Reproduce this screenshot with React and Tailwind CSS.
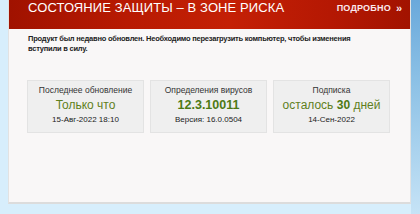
export default function App() {
  return (
    <div className="w-[420px] h-[214px] overflow-hidden flex bg-[#d7eefc]" style={{ fontFamily: '"Liberation Sans", Arial, sans-serif' }}>
      <div className="w-[8px] shrink-0" />
      <div className="w-[403px] shrink-0 flex flex-col">
        <div className="h-[204px] flex flex-col bg-[#f9f7f7] border-l border-[#e2e2e2] border-b-2 border-b-[#dcdcdc] border-r border-r-[#e2e2e2]">
          <div className="h-[29px] shrink-0 flex items-start justify-between pl-[19px] pr-[8px] bg-[linear-gradient(90deg,#a01200_0%,#b81a02_30%,#c42005_55%,#b51803_80%,#a21300_100%)]">
            <div className="text-white text-[13px] leading-[16px] pt-0 tracking-[0.1px]">СОСТОЯНИЕ ЗАЩИТЫ – В ЗОНЕ РИСКА</div>
            <div className="text-[#fbe9ee] text-[9px] font-bold leading-[12px] pt-[2px] flex items-center gap-[5px]">
              <span className="tracking-[0.2px]">ПОДРОБНО</span>
              <span className="text-[11px]">»</span>
            </div>
          </div>
          <div className="pl-[19px] pt-[5px] text-[7.5px] font-bold leading-[10px] text-[#222] w-[370px] tracking-[-0.22px]">
            Продукт был недавно обновлен. Необходимо перезагрузить компьютер, чтобы изменения вступили в силу.
          </div>
          <div className="flex gap-[6px] pl-[18px] pt-[26px]">
            <Card label="Последнее обновление" sub="15-Авг-2022 18:10">
              <span className="text-[12px] text-[#5f7f1c]">Только что</span>
            </Card>
            <Card label="Определения вирусов" sub="Версия: 16.0.0504">
              <span className="text-[12.5px] font-bold text-[#4d7a14]">12.3.10011</span>
            </Card>
            <Card label="Подписка" sub="14-Сен-2022">
              <span className="text-[12px] text-[#5f7f1c]">осталось <b className="text-[#4d7a14]">30</b> дней</span>
            </Card>
          </div>
        </div>
      </div>
      <div className="flex-1 bg-[linear-gradient(180deg,#6aa9db_0%,#8ec2e6_40%,#c6e3f6_100%)]" />
    </div>
  );
}

function Card({ label, sub, children }) {
  return (
    <div className="w-[117px] h-[53px] bg-[#efefef] border border-[#e3e3e3] flex flex-col items-center pt-[4px]">
      <div className="text-[8.5px] leading-[11px] text-[#333]">{label}</div>
      <div className="leading-[16px]">{children}</div>
      <div className="text-[8px] leading-[11px] text-[#222] mt-[1px]">{sub}</div>
    </div>
  );
}
